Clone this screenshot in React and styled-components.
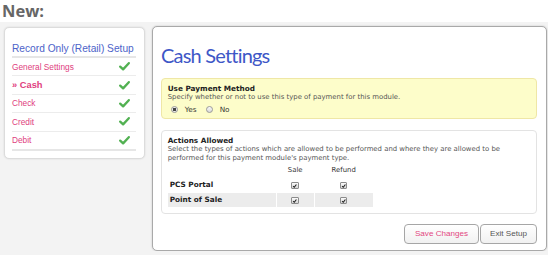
import React from 'react'
import styled, { createGlobalStyle } from 'styled-components'

const GlobalStyle = createGlobalStyle`
    body {
        margin: 0;
        background: #f3f3f3;
    }
`

const Header = styled.div`
    background: #fff;
    color: #666;
    font-family: 'Open Sans', sans-serif;
    font-size: 16.5px;
    font-weight: 700;
    height: 22px;
    line-height: 22px;
    padding-left: 2px;
`

const Content = styled.div`
    align-items: flex-start;
    display: flex;
    gap: 7px;
    padding: 4px 0 0 4px;
`

const Sidebar = styled.div`
    background: #fff;
    border: 1px solid #dcdcdc;
    border-radius: 5px;
    box-shadow: 0 0 2px rgba(0, 0, 0, 0.12);
    box-sizing: border-box;
    margin-top: 1px;
    padding: 0 8px 7px 7px;
    width: 141px;
`

const SideTitle = styled.div`
    border-bottom: 2px solid #e6e6e6;
    color: #4d63c9;
    font-family: 'Liberation Sans', Arial, sans-serif;
    font-size: 10.2px;
    line-height: 13px;
    padding: 14px 0 1px 0;
    white-space: nowrap;
`

const SideItem = styled.div`
    align-items: center;
    border-bottom: ${props => props.last ? '2px solid #e6e6e6' : '1px solid #ececec'};
    color: #e0407e;
    display: flex;
    font-family: 'Liberation Sans', Arial, sans-serif;
    font-size: ${props => props.active ? '9.3px' : '8.3px'};
    font-weight: ${props => props.active ? 700 : 400};
    height: 17.4px;
    justify-content: space-between;
    padding: 0 6px 0 0;
`

const Panel = styled.div`
    background: #fff;
    border: 1px solid #a9a9a9;
    border-radius: 5px;
    box-shadow: 0 0 2px rgba(0, 0, 0, 0.2);
    box-sizing: border-box;
    padding: 16px 9px 6.7px 8px;
    width: 395px;
`

const Title = styled.h1`
    color: #3e57c7;
    font-family: Lato, sans-serif;
    font-size: 20px;
    font-weight: 400;
    letter-spacing: -0.8px;
    line-height: 24px;
    margin: 0 0 10.7px 0;
`

const Box = styled.div`
    background: ${props => props.warn ? '#fdfdca' : '#fff'};
    border: 1px solid ${props => props.warn ? '#efe7a6' : '#e3e3e3'};
    border-radius: 4px;
    font-family: 'DejaVu Sans', Verdana, sans-serif;
    margin-bottom: ${props => props.warn ? '11.3px' : '9.7px'};
    padding: 5px 6px ${props => props.warn ? '2px' : '5px'} 5.7px;
`

const BoxTitle = styled.div`
    color: #222;
    font-size: 7.3px;
    font-weight: 700;
    line-height: 9px;
`

const BoxText = styled.div`
    color: #555;
    font-size: 6.9px;
    line-height: 9px;
`

const RadioRow = styled.div`
    align-items: center;
    color: #333;
    display: flex;
    font-size: 7.3px;
    height: 12px;
    margin-top: 2px;
    padding-left: 3.5px;
`

const RadioDot = styled.span`
    background: ${props => props.checked
        ? 'radial-gradient(circle, #444 0, #444 1.4px, #eee 1.9px, #d4d4d4 100%)'
        : 'linear-gradient(#fafafa, #d8d8d8)'};
    border: 1px solid #9a9a9a;
    border-radius: 50%;
    box-sizing: border-box;
    display: inline-block;
    height: 7px;
    margin-right: 6.5px;
    width: 7px;
`

const RadioLabel = styled.span`
    margin-right: 9.7px;
`

const Table = styled.table`
    border-collapse: separate;
    border-spacing: 1px;
    margin-left: -1px;
`

const HeadCell = styled.td`
    color: #333;
    font-size: 6.9px;
    font-weight: 400;
    height: 13px;
    padding: 0;
    text-align: center;
`

const Cell = styled.td`
    background: ${props => props.shaded ? '#ececec' : 'transparent'};
    color: #222;
    font-size: 7.3px;
    font-weight: ${props => props.label ? 700 : 400};
    height: 14px;
    padding: 0 0 0 ${props => props.label ? '2px' : '0'};
    text-align: ${props => props.label ? 'left' : 'center'};
    width: ${props => props.width}px;
`

const Check = styled.span`
    background: linear-gradient(#fbfbfb, #d6d6d6);
    border: 1px solid #8c8c8c;
    border-radius: 1px;
    box-sizing: border-box;
    display: inline-flex;
    height: 7.5px;
    vertical-align: middle;
    width: 7.5px;
`

const Buttons = styled.div`
    display: flex;
    gap: 1px;
    justify-content: flex-end;
`

const Button = styled.button`
    background: linear-gradient(#fff, #f1f1f1);
    border: 1px solid #a6a6a6;
    border-radius: 4px;
    box-shadow: inset 0 1px 0 #fff;
    color: ${props => props.primary ? '#e2477f' : '#555'};
    font-family: 'Liberation Sans', Arial, sans-serif;
    font-size: 8.1px;
    height: 20px;
    padding: 0;
    width: ${props => props.width}px;
`

const GreenCheck = () => (
    <svg width="11" height="9" viewBox="0 0 11 9">
        <path d="M1.2 4.6 L4.1 7.4 L9.8 1.2" fill="none" stroke="#52b152" strokeWidth="2.3" strokeLinecap="round" strokeLinejoin="round" />
    </svg>
)

const Tick = () => (
    <Check>
        <svg width="6" height="6" viewBox="0 0 6 6">
            <path d="M1.2 3.1 L2.5 4.4 L4.8 1.4" fill="none" stroke="#222" strokeWidth="1.2" />
        </svg>
    </Check>
)

const steps = [
    { name: 'General Settings' },
    { name: '» Cash', active: true },
    { name: 'Check' },
    { name: 'Credit' },
    { name: 'Debit' },
]

const places = ['PCS Portal', 'Point of Sale']

export default function App() {
    return (
        <>
            <GlobalStyle />
            <Header>New:</Header>
            <Content>
                <Sidebar>
                    <SideTitle>Record Only (Retail) Setup</SideTitle>
                    {steps.map((step, i) => (
                        <SideItem key={step.name} active={step.active} last={i === steps.length - 1}>
                            <span>{step.name}</span>
                            <GreenCheck />
                        </SideItem>
                    ))}
                </Sidebar>
                <Panel>
                    <Title>Cash Settings</Title>
                    <Box warn>
                        <BoxTitle>Use Payment Method</BoxTitle>
                        <BoxText>Specify whether or not to use this type of payment for this module.</BoxText>
                        <RadioRow>
                            <RadioDot checked />
                            <RadioLabel>Yes</RadioLabel>
                            <RadioDot />
                            <RadioLabel>No</RadioLabel>
                        </RadioRow>
                    </Box>
                    <Box>
                        <BoxTitle>Actions Allowed</BoxTitle>
                        <BoxText>
                            Select the types of actions which are allowed to be performed and where they are allowed to be
                            <br />
                            performed for this payment module's payment type.
                        </BoxText>
                        <Table>
                            <tbody>
                                <tr>
                                    <HeadCell />
                                    <HeadCell>Sale</HeadCell>
                                    <HeadCell>Refund</HeadCell>
                                </tr>
                                {places.map((place, i) => (
                                    <tr key={place}>
                                        <Cell label width={106} shaded={i === 1}>{place}</Cell>
                                        <Cell width={37} shaded={i === 1}><Tick /></Cell>
                                        <Cell width={58} shaded={i === 1}><Tick /></Cell>
                                    </tr>
                                ))}
                            </tbody>
                        </Table>
                    </Box>
                    <Buttons>
                        <Button primary width={75}>Save Changes</Button>
                        <Button width={57}>Exit Setup</Button>
                    </Buttons>
                </Panel>
            </Content>
        </>
    )
}
